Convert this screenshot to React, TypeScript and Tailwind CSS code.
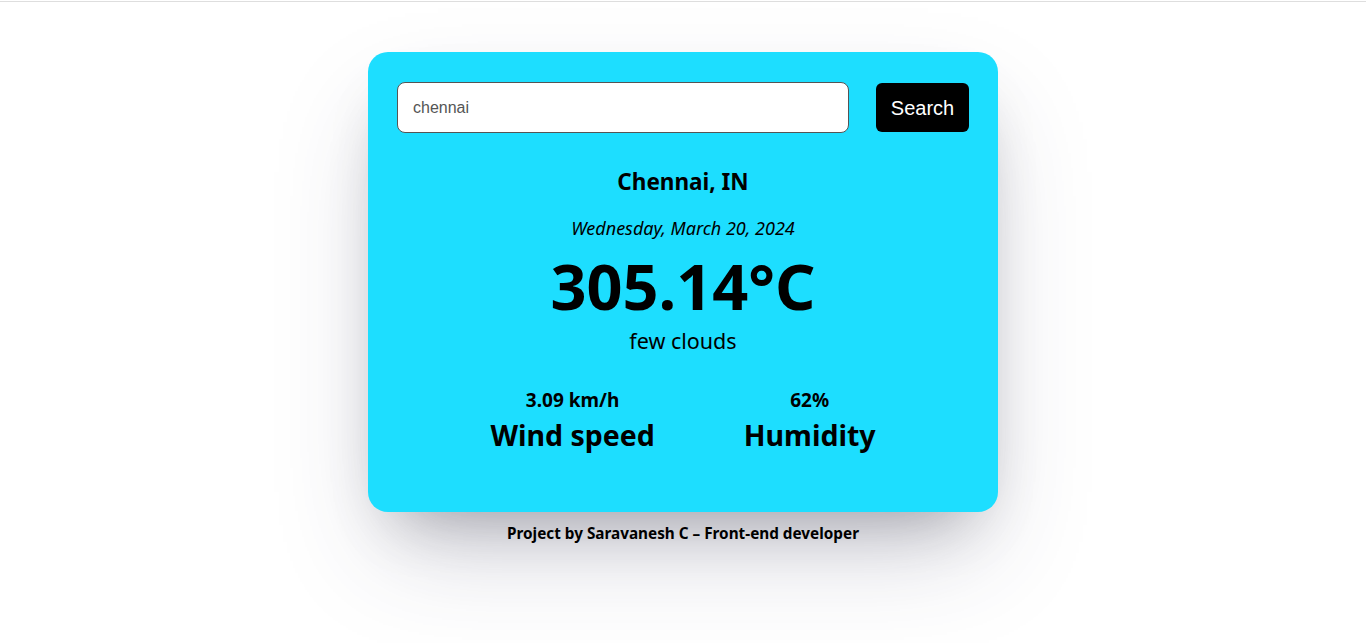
import React from "react";

export default function App() {
  return (
    <div className="min-h-[643px] bg-white pt-px" style={{ fontFamily: '"Noto Sans", sans-serif' }}>
      <div className="border-t border-[#dedede]" />
      <div className="flex flex-col items-center pt-[50px]">
        <div className="w-[630px] h-[460px] rounded-[20px] bg-[#1ddeff] px-[29px] pt-[30px] shadow-[0px_50px_100px_-20px_rgba(50,50,93,0.25),0px_30px_60px_-30px_rgba(0,0,0,0.3)]">
          <div className="flex items-center gap-[27px]">
            <input
              defaultValue="chennai"
              className="h-[51px] w-[452px] rounded-[8px] border border-[#555] bg-white px-[15px] text-[16px] text-[#555] outline-none"
              style={{ fontFamily: '"Liberation Sans", Arial, sans-serif' }}
            />
            <button
              className="h-[49px] w-[93px] rounded-[6px] bg-black text-[20px] text-white"
              style={{ fontFamily: '"Liberation Sans", Arial, sans-serif' }}
            >
              Search
            </button>
          </div>
          <div className="flex flex-col items-center text-black">
            <div className="mt-[33px] text-[22.5px] leading-[32px] font-bold">Chennai, IN</div>
            <div className="mt-[18px] text-[18px] leading-[24px] italic">Wednesday, March 20, 2024</div>
            <div className="mt-[10px] text-[63px] leading-[72px] font-bold">305.14°C</div>
            <div className="mt-[5px] text-[21.5px] leading-[28px]">few clouds</div>
            <div className="mt-[32px] flex justify-center gap-[89px]">
              <div className="flex flex-col items-center">
                <div className="text-[19px] leading-[26px] font-bold">3.09 km/h</div>
                <div className="mt-[2px] text-[28.5px] leading-[40px] font-bold">Wind speed</div>
              </div>
              <div className="flex flex-col items-center">
                <div className="text-[19px] leading-[26px] font-bold">62%</div>
                <div className="mt-[2px] text-[28.5px] leading-[40px] font-bold">Humidity</div>
              </div>
            </div>
          </div>
        </div>
        <div className="mt-[11px] text-[15.3px] leading-[20px] font-bold text-black">
          Project by Saravanesh C – Front-end developer
        </div>
      </div>
    </div>
  );
}
